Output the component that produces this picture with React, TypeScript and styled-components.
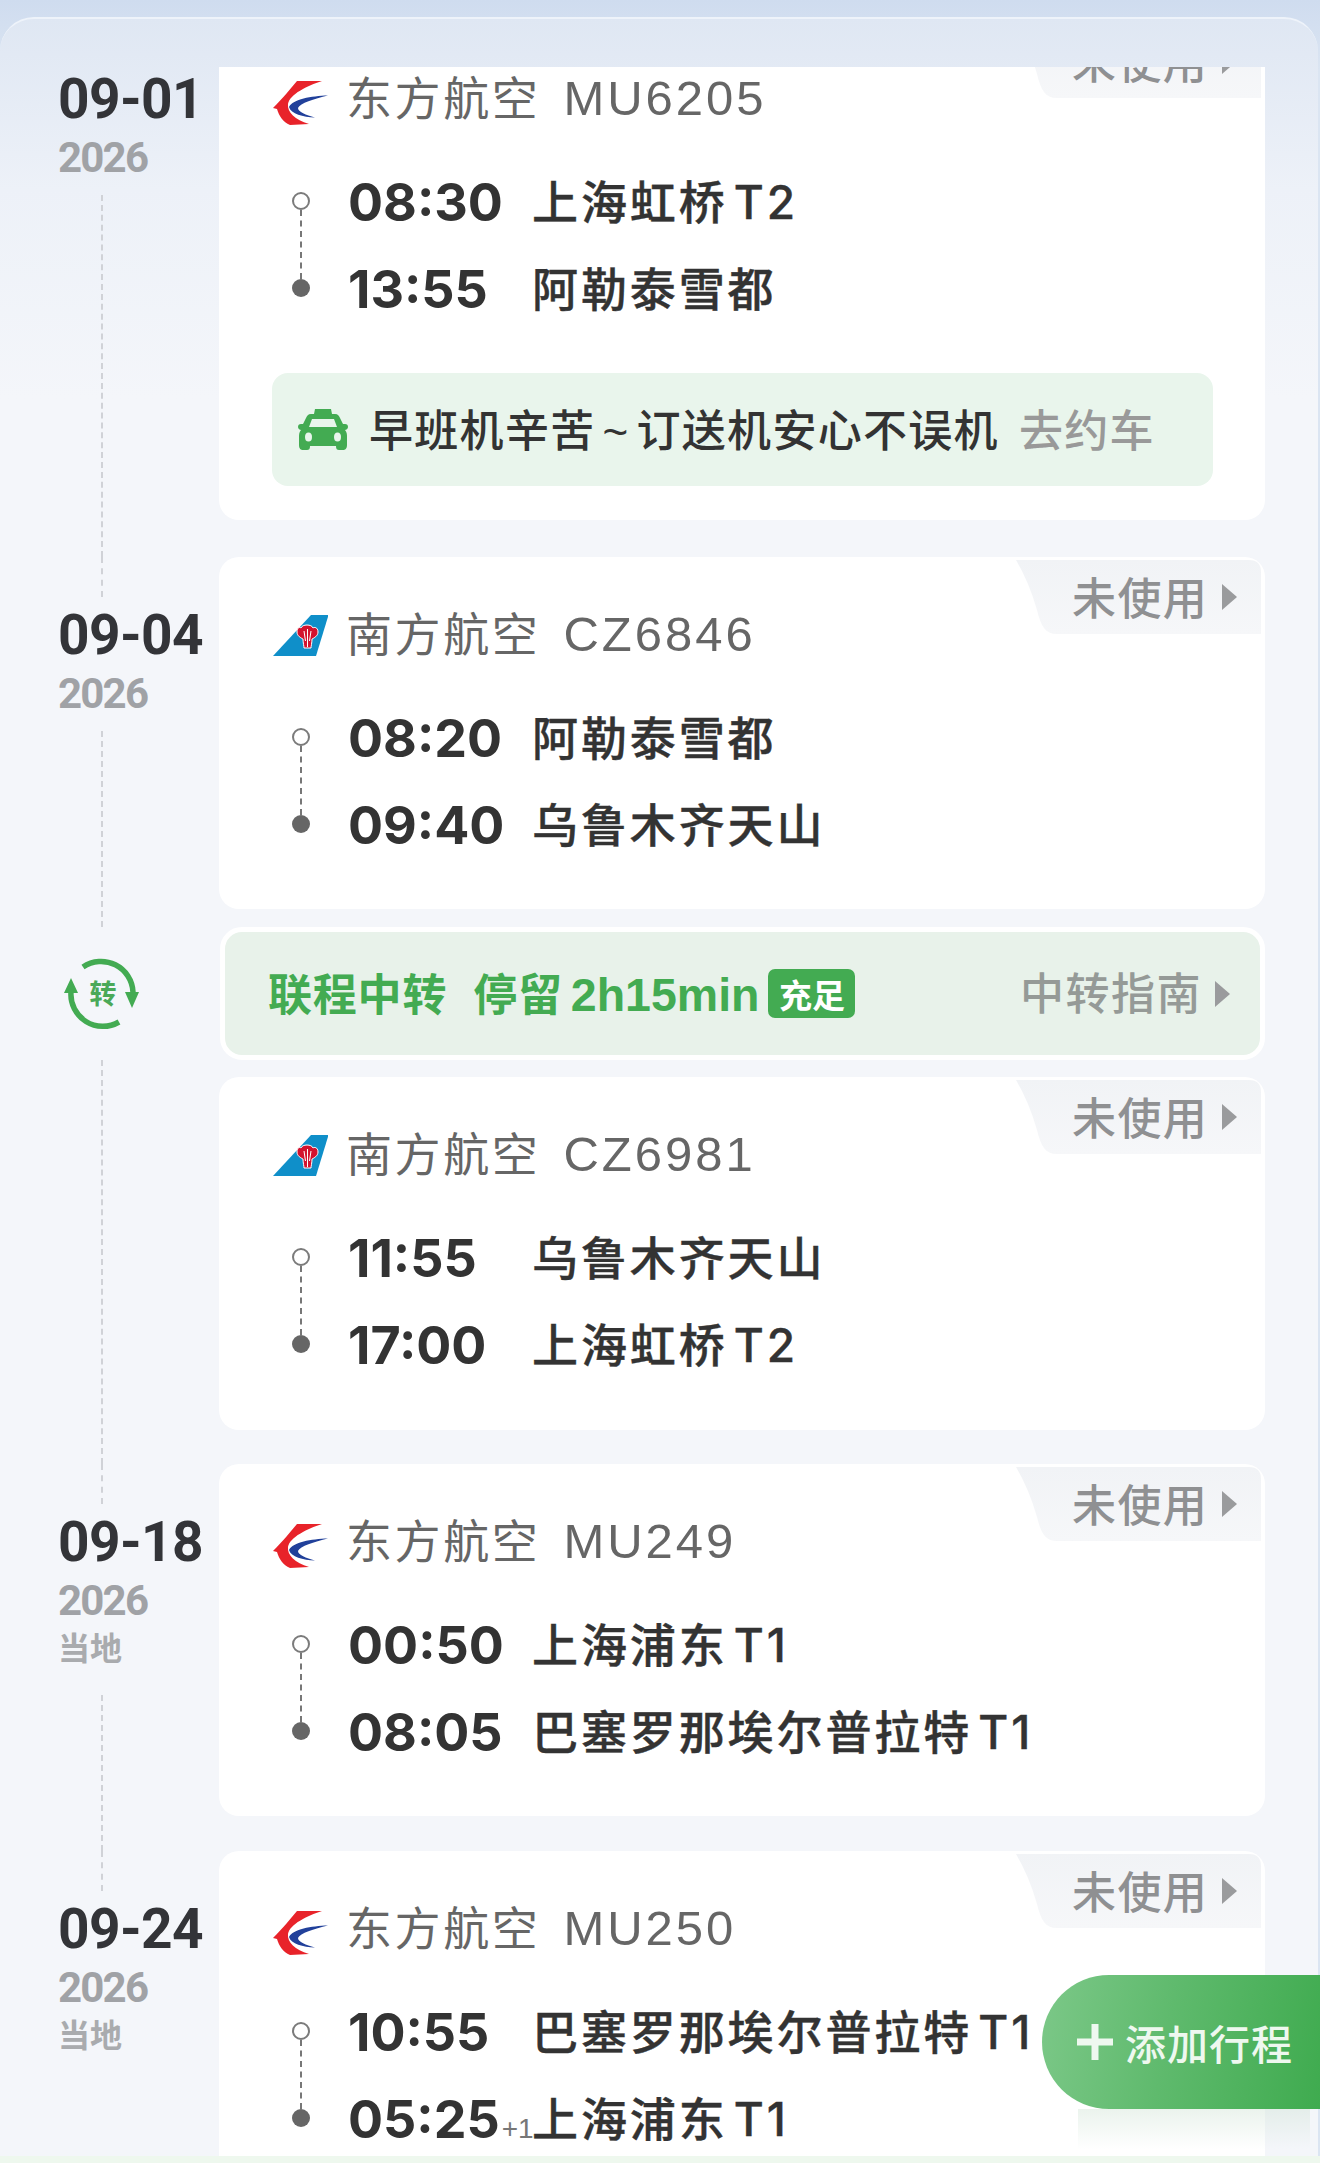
import React from "react";
import styled, { createGlobalStyle } from "styled-components";

const GlobalStyle = createGlobalStyle`
  html, body {
    margin: 0;
    padding: 0;
    background: #d3e0f1;
    font-family: "Liberation Sans", "Noto Sans CJK SC", sans-serif;
  }
`;

const Page = styled.div`
  position: relative;
  width: 1320px;
  height: 2163px;
  overflow: hidden;
  padding-top: 17px;
  box-sizing: border-box;
  background: linear-gradient(180deg, #cfdcef 0, #dbe5f2 70px);
`;

const Panel = styled.div`
  width: 1318px;
  height: 2139px;
  box-sizing: border-box;
  padding-top: 48px;
  border-radius: 34px 34px 0 0;
  border-top: 2px solid #eef3fa;
  background: linear-gradient(180deg, #dfe7f3 0, #edf1f8 170px, #f4f6fa 380px);
`;

const BottomStrip = styled.div`
  height: 7px;
  background: #eef8ee;
`;

const Scroller = styled.div`
  height: 2089px;
  overflow: hidden;
`;

const Row = styled.div<{ $offset?: number }>`
  display: grid;
  grid-template-columns: 219px 1046px;
  margin-top: ${(p) => p.$offset ?? 0}px;
`;

const DateCol = styled.div`
  display: flex;
  flex-direction: column;
  align-items: flex-start;
  padding-left: 58px;
`;

const DateText = styled.div<{ $top: number }>`
  height: 50px;
  line-height: 50px;
  margin-top: ${(p) => p.$top}px;
  font-family: Roboto, sans-serif;
  font-weight: 700;
  font-size: 55px;
  letter-spacing: -0.6px;
  color: #333438;
`;

const YearText = styled.div`
  margin-top: 17px;
  height: 34px;
  line-height: 34px;
  font-family: Roboto, sans-serif;
  font-weight: 700;
  font-size: 42px;
  letter-spacing: -1.8px;
  color: #a0a2a6;
`;

const LocalText = styled.div`
  margin-top: 10px;
  height: 36px;
  line-height: 36px;
  font-family: "Noto Sans CJK SC", sans-serif;
  font-weight: 700;
  font-size: 32px;
  color: #a9abae;
`;

const Dash = styled.div<{ $height?: number; $gap?: number }>`
  align-self: flex-start;
  margin-left: 43px;
  margin-top: ${(p) => p.$gap ?? 0}px;
  width: 0;
  flex: ${(p) => (p.$height ? "none" : 1)};
  height: ${(p) => (p.$height ? `${p.$height}px` : "auto")};
  border-left: 2px dashed #d0d2d7;
`;

const Card = styled.div<{ $bottom: number; $top?: number; $height: number }>`
  position: relative;
  box-sizing: border-box;
  height: ${(p) => p.$height}px;
  margin-top: ${(p) => p.$top ?? 0}px;
  margin-bottom: ${(p) => p.$bottom}px;
  padding: 50px 0 0 54px;
  background: #fff;
  border-radius: 20px;
`;

const StatusTag = styled.div`
  position: absolute;
  top: 3px;
  right: 4px;
  width: 248px;
  height: 74px;
  display: flex;
  align-items: flex-start;
  box-sizing: border-box;
  padding: 11px 0 0 59px;
  background: linear-gradient(180deg, #f1f3f6, #f6f7f9);
  clip-path: path("M3 0 H236 Q248 0 248 12 V74 H44 C32 74 28 66 24 50 Q16 22 3 0 Z");
  font-family: "Noto Sans CJK SC", sans-serif;
  font-weight: 500;
  font-size: 44px;
  letter-spacing: 1.4px;
  line-height: 50px;
  color: #8f9092;
`;

const Triangle = styled.span<{ $left: number; $top: number }>`
  display: block;
  flex: none;
  margin: ${(p) => p.$top}px 0 0 ${(p) => p.$left}px;
  width: 0;
  height: 0;
  border-style: solid;
  border-width: 13px 0 13px 15px;
  border-color: transparent transparent transparent #9a9b9d;
`;

const Header = styled.div`
  display: flex;
  align-items: center;
  height: 54px;
  gap: 18px;
`;

const LogoBox = styled.svg<{ $shift: number }>`
  flex: none;
  width: 55px;
  margin-top: ${(p) => p.$shift}px;
`;

const AirlineName = styled.div`
  display: flex;
  align-items: center;
  color: #666;
`;

const AirlineCn = styled.span`
  padding-bottom: 6px;
  font-family: "Noto Sans CJK SC", sans-serif;
  font-size: 46px;
  letter-spacing: 2.6px;
`;

const FlightNo = styled.span`
  margin-left: 23px;
  font-family: "Liberation Sans", sans-serif;
  font-size: 49px;
  letter-spacing: 3px;
  color: #666;
`;

const Legs = styled.div`
  display: flex;
  margin-top: 47px;
`;

const Rail = styled.div`
  display: flex;
  flex-direction: column;
  align-items: center;
  width: 18px;
  margin: 20px 38px 0 19px;
  height: 105px;
`;

const RingDot = styled.div`
  box-sizing: border-box;
  flex: none;
  width: 18px;
  height: 18px;
  border-radius: 50%;
  border: 2px solid #7b7b7b;
  background: #fff;
`;

const SolidDot = styled.div`
  flex: none;
  width: 18px;
  height: 18px;
  border-radius: 50%;
  background: #666;
`;

const RailLine = styled.div`
  flex: 1;
  width: 0;
  border-left: 2px dashed #777;
`;

const LegList = styled.div`
  display: flex;
  flex-direction: column;
  gap: 27px;
`;

const Leg = styled.div`
  display: flex;
  align-items: center;
  height: 60px;
`;

const Time = styled.div`
  width: 184px;
  flex: none;
  display: flex;
  align-items: baseline;
  font-family: Inter, sans-serif;
  font-weight: 700;
  font-size: 52px;
  color: #333;
  white-space: nowrap;
`;

const NextDay = styled.span`
  font-family: "Liberation Sans", sans-serif;
  font-weight: 400;
  font-size: 28px;
  color: #777;
  margin-left: 2px;
`;

const Station = styled.div`
  padding-bottom: 7px;
  font-family: Inter, "Noto Sans CJK SC", sans-serif;
  font-weight: 500;
  font-size: 46px;
  letter-spacing: 2.9px;
  word-spacing: -9px;
  -webkit-text-stroke: 0.4px #333;
  color: #333;
  white-space: nowrap;
`;

const Promo = styled.div`
  display: flex;
  align-items: center;
  box-sizing: border-box;
  width: 941px;
  height: 113px;
  margin: 54px 0 0 -1px;
  padding-left: 26px;
  border-radius: 16px;
  background: #e9f5ec;
`;

const PromoText = styled.div`
  margin-left: 21px;
  padding-bottom: 4px;
  font-family: "Liberation Sans", "Noto Sans CJK SC", sans-serif;
  font-weight: 500;
  font-size: 44px;
  letter-spacing: 1.3px;
  color: #333;
  white-space: nowrap;
`;

const Tilde = styled.span`
  margin: 0 7px;
`;

const PromoLink = styled.span`
  margin-left: 20px;
  color: #999;
`;

const TransferIconCol = styled.div`
  position: relative;
  height: 133px;
`;

const TransferIcon = styled.svg`
  display: block;
  position: absolute;
  left: 65px;
  top: 32px;
  width: 76px;
  height: 72px;
  overflow: visible;
`;

const TransferBar = styled.div`
  display: flex;
  align-items: center;
  box-sizing: border-box;
  height: 133px;
  padding: 0 30px 0 43px;
  border: 5px solid #fff;
  border-radius: 22px;
  background: #e8f2ea;
  margin-left: 1px;
  width: 1045px;
`;

const TransferTitle = styled.div`
  padding-bottom: 4px;
  font-family: "Noto Sans CJK SC", sans-serif;
  font-weight: 700;
  font-size: 44px;
  letter-spacing: 0.8px;
  color: #43ab52;
  white-space: nowrap;
`;

const TransferStay = styled(TransferTitle)`
  margin-left: 26px;
`;

const StayTime = styled.span`
  margin-left: 8px;
  font-family: "Liberation Sans", sans-serif;
  font-size: 46.5px;
  letter-spacing: 0;
`;

const Enough = styled.span`
  display: flex;
  align-items: center;
  justify-content: center;
  width: 87px;
  height: 49px;
  margin-left: 9px;
  border-radius: 7px;
  background: #43ab52;
  color: #fff;
  font-family: "Noto Sans CJK SC", sans-serif;
  font-weight: 700;
  font-size: 33px;
`;

const Guide = styled.div`
  margin-left: auto;
  display: flex;
  align-items: center;
  font-family: "Noto Sans CJK SC", sans-serif;
  font-weight: 500;
  font-size: 44px;
  letter-spacing: 1.5px;
  color: #959a97;
`;

const GuideText = styled.span`
  padding-bottom: 6px;
`;

const AddButton = styled.div`
  position: absolute;
  right: 0;
  top: 1975px;
  width: 278px;
  height: 134px;
  display: flex;
  align-items: center;
  box-sizing: border-box;
  padding-left: 35px;
  border-radius: 67px 0 0 67px;
  background: linear-gradient(100deg, #7cc888 0, #5fba6d 45%, #3fab4f 100%);
  color: #eef8ef;
  font-family: "Noto Sans CJK SC", sans-serif;
  font-weight: 500;
  font-size: 41px;
  letter-spacing: 1px;

  &::after {
    content: "";
    position: absolute;
    left: 36px;
    right: 10px;
    top: 100%;
    height: 40px;
    background: linear-gradient(180deg, rgba(205, 225, 210, 0.4), rgba(255, 255, 255, 0));
  }
`;

const Plus = styled.svg`
  flex: none;
  width: 36px;
  height: 36px;
  margin-right: 12px;
`;

const MuLogo = () => (
  <LogoBox $shift={9} viewBox="0 0 55 45" height={45}>
    <path
      d="M49 1 L24 1 C18 8 10 18 0 28 L4 29 C6 36 10 42 17 45 L36 44 C22 40 14 32 15 24 C17 14 34 6 49 1 Z"
      fill="#e8232a"
    />
    <path
      d="M55 15.5 C38 16 20 19 16 27 C18 34 30 37 42 37.5 C33 35 25 32 25 28 C27 23 41 19 55 15.5 Z"
      fill="#21409a"
    />
  </LogoBox>
);

const CzLogo = () => (
  <LogoBox $shift={2} viewBox="0 0 55 41" height={41}>
    <path d="M38 0 H55.5 L43 41 H0 Z" fill="#0f8fc9" />
    <path
      d="M24 17 C24 12 27 12 28 13 C29 9 39 9 40 13 C41 12 45 12 45 17 C45 21 41 23 39 24 C39 28 38 31 38 33 H31 C31 31 30 28 30 24 C28 23 24 21 24 17 Z"
      fill="#d2122e"
      stroke="#fff"
      strokeWidth="1"
    />
    <path d="M34.5 14 V32 M31 16 L32.5 26 M38 16 L36.5 26" stroke="#fff" strokeWidth="1" fill="none" />
  </LogoBox>
);

const TaxiIcon = () => (
  <svg width="50" height="42" viewBox="0 0 50 42">
    <path
      d="M17 0 H33 L34 5 H37 C40 5 41 7 42 9 L45 15 H47 C49 15 50 16 50 18 C50 20 48 21 47 21 C49 23 49 26 49 28 V36 C49 40 47 41 45 41 H41 C39 41 38 40 38 37 H12 C12 40 11 41 9 41 H5 C3 41 1 40 1 36 V28 C1 26 1 23 3 21 C2 21 0 20 0 18 C0 16 1 15 3 15 H5 L8 9 C9 7 10 5 13 5 H16 Z"
      fill="#43ab52"
    />
    <path d="M14 10 H36 L39 18 H11 Z" fill="#e9f5ec" />
    <ellipse cx="10.5" cy="28" rx="3.5" ry="4.5" fill="#e9f5ec" />
    <ellipse cx="39.5" cy="28" rx="3.5" ry="4.5" fill="#e9f5ec" />
  </svg>
);

const FlightCard = ({
  logo,
  airline,
  flight,
  from,
  to,
  fromTime,
  toTime,
  nextDay,
  height,
  bottom,
  top,
  children,
}: {
  logo: React.ReactNode;
  airline: string;
  flight: string;
  from: string;
  to: string;
  fromTime: string;
  toTime: string;
  nextDay?: boolean;
  height: number;
  bottom: number;
  top?: number;
  children?: React.ReactNode;
}) => (
  <Card $height={height} $bottom={bottom} $top={top}>
    <StatusTag>
      未使用
      <Triangle $left={14} $top={13} />
    </StatusTag>
    <Header>
      {logo}
      <AirlineName>
        <AirlineCn>{airline}</AirlineCn>
        <FlightNo>{flight}</FlightNo>
      </AirlineName>
    </Header>
    <Legs>
      <Rail>
        <RingDot />
        <RailLine />
        <SolidDot />
      </Rail>
      <LegList>
        <Leg>
          <Time>{fromTime}</Time>
          <Station>{from}</Station>
        </Leg>
        <Leg>
          <Time>
            {toTime}
            {nextDay && <NextDay>+1</NextDay>}
          </Time>
          <Station>{to}</Station>
        </Leg>
      </LegList>
    </Legs>
    {children}
  </Card>
);

export default function App() {
  return (
    <>
      <GlobalStyle />
      <Page>
        <Panel>
          <Scroller>
            <Row $offset={-46}>
              <DateCol>
                <DateText $top={53}>09-01</DateText>
                <YearText>2026</YearText>
                <Dash $gap={20} />
              </DateCol>
              <FlightCard
                logo={<MuLogo />}
                airline="东方航空"
                flight="MU6205"
                from="上海虹桥 T2"
                to="阿勒泰雪都"
                fromTime="08:30"
                toTime="13:55"
                height={499}
                bottom={37}
              >
                <Promo>
                  <TaxiIcon />
                  <PromoText>
                    早班机辛苦
                    <Tilde>~</Tilde>
                    订送机安心不误机
                    <PromoLink>去约车</PromoLink>
                  </PromoText>
                </Promo>
              </FlightCard>
            </Row>
            <Row>
              <DateCol>
                <Dash $height={40} />
                <DateText $top={13}>09-04</DateText>
                <YearText>2026</YearText>
                <Dash $gap={20} />
              </DateCol>
              <FlightCard
                logo={<CzLogo />}
                airline="南方航空"
                flight="CZ6846"
                from="阿勒泰雪都"
                to="乌鲁木齐天山"
                fromTime="08:20"
                toTime="09:40"
                height={352}
                bottom={18}
              />
            </Row>
            <Row>
              <TransferIconCol>
                <TransferIcon viewBox="0 0 76 72">
                  <path d="M18 8 A32 32 0 0 1 68 33" fill="none" stroke="#43ab52" strokeWidth="5.5" />
                  <path d="M60 33 H74 L67 49 Z" fill="#43ab52" />
                  <path d="M54 63 A32 32 0 0 1 6 33" fill="none" stroke="#43ab52" strokeWidth="5.5" />
                  <path d="M-1 34 H13 L6 19 Z" fill="#43ab52" />
                  <text
                    x="38"
                    y="45"
                    textAnchor="middle"
                    fontFamily="Noto Sans CJK SC"
                    fontWeight="700"
                    fontSize="27"
                    fill="#4aa958"
                  >
                    转
                  </text>
                </TransferIcon>
              </TransferIconCol>
              <TransferBar>
                <TransferTitle>联程中转</TransferTitle>
                <TransferStay>
                  停留<StayTime>2h15min</StayTime>
                </TransferStay>
                <Enough>充足</Enough>
                <Guide>
                  <GuideText>中转指南</GuideText>
                  <Triangle $left={13} $top={0} />
                </Guide>
              </TransferBar>
            </Row>
            <Row>
              <DateCol>
                <Dash $gap={0} />
              </DateCol>
              <FlightCard
                logo={<CzLogo />}
                airline="南方航空"
                flight="CZ6981"
                from="乌鲁木齐天山"
                to="上海虹桥 T2"
                fromTime="11:55"
                toTime="17:00"
                height={353}
                top={17}
                bottom={34}
              />
            </Row>
            <Row>
              <DateCol>
                <Dash $height={40} />
                <DateText $top={13}>09-18</DateText>
                <YearText>2026</YearText>
                <LocalText>当地</LocalText>
                <Dash $gap={31} />
              </DateCol>
              <FlightCard
                logo={<MuLogo />}
                airline="东方航空"
                flight="MU249"
                from="上海浦东 T1"
                to="巴塞罗那埃尔普拉特 T1"
                fromTime="00:50"
                toTime="08:05"
                height={352}
                bottom={35}
              />
            </Row>
            <Row>
              <DateCol>
                <Dash $height={40} />
                <DateText $top={13}>09-24</DateText>
                <YearText>2026</YearText>
                <LocalText>当地</LocalText>
              </DateCol>
              <FlightCard
                logo={<MuLogo />}
                airline="东方航空"
                flight="MU250"
                from="巴塞罗那埃尔普拉特 T1"
                to="上海浦东 T1"
                fromTime="10:55"
                toTime="05:25"
                nextDay
                height={352}
                bottom={0}
              />
            </Row>
          </Scroller>
        </Panel>
        <BottomStrip />
        <AddButton>
          <Plus viewBox="0 0 36 36">
            <path d="M14.5 0 H21.5 V14.5 H36 V21.5 H21.5 V36 H14.5 V21.5 H0 V14.5 H14.5 Z" fill="#eef8ef" />
          </Plus>
          添加行程
        </AddButton>
      </Page>
    </>
  );
}
